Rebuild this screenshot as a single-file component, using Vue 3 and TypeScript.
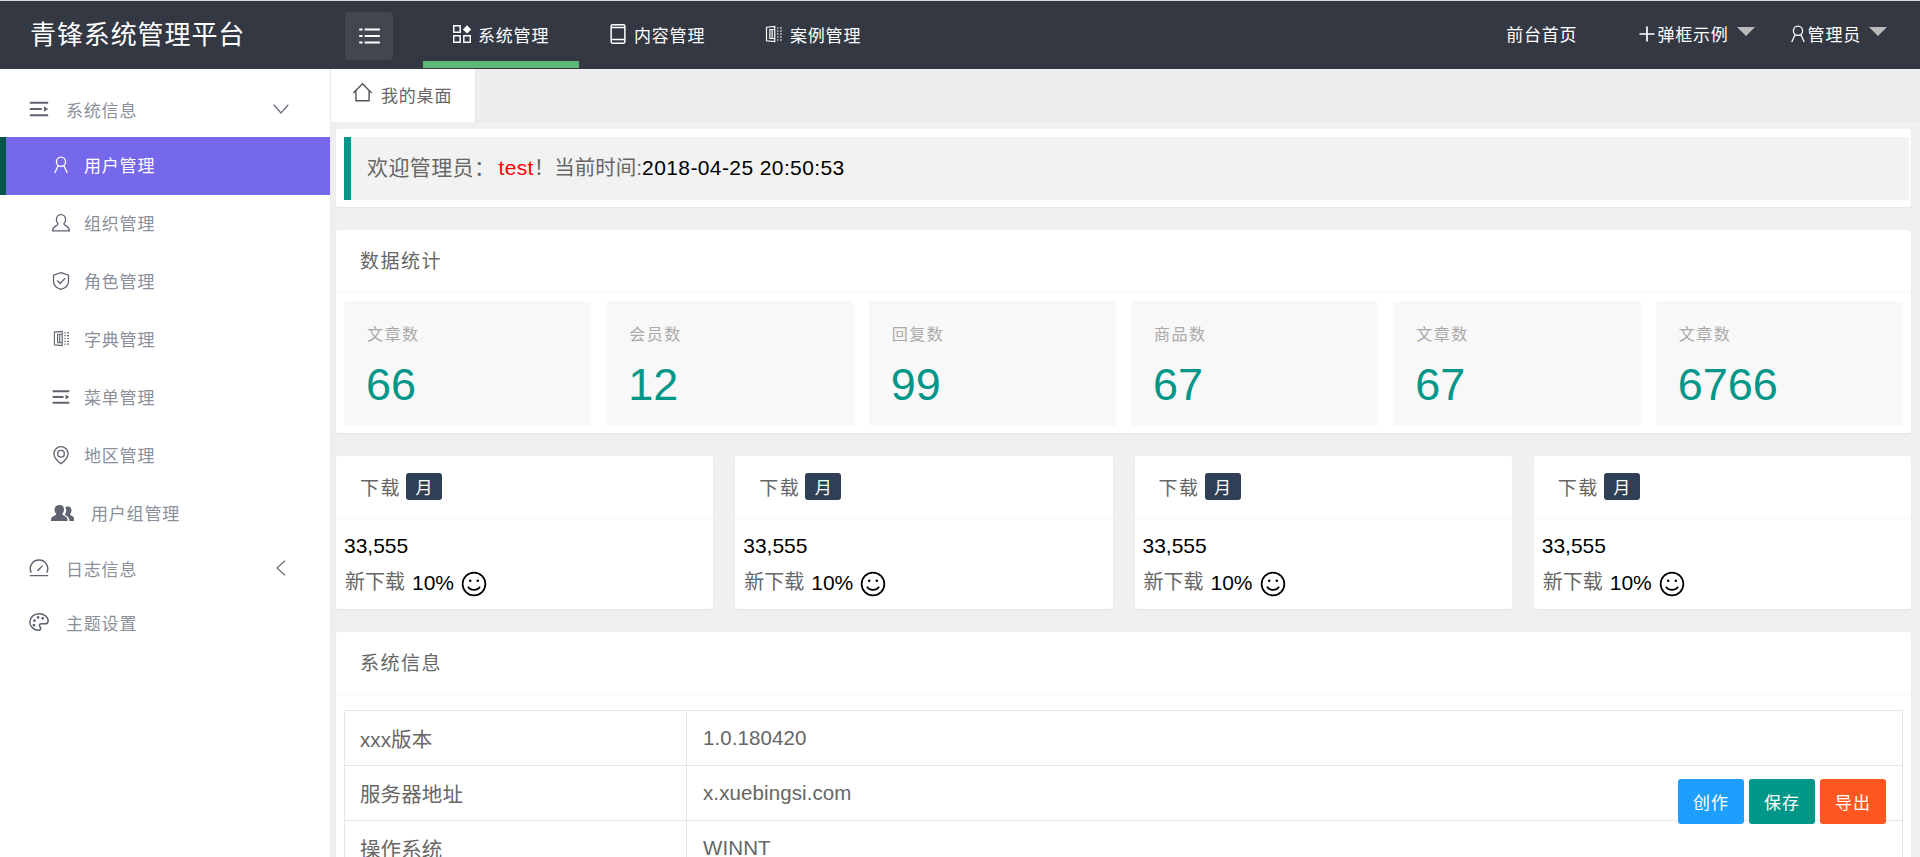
<script setup lang="ts">
import { h } from 'vue'

type IconDef = { stroke?: string[]; solid?: string[] }

const icons: Record<string, IconDef> = {
  bars: { solid: ['M2 4h20v2.400H2zM2 10.800h13v2.400H2zM2 17.600h20V20H2zM17.500 9l4.500 3-4.500 3z'] },
  list: { solid: ['M3 5h3v2H3zM8 5h14v2H8zM3 11h3v2H3zM8 11h14v2H8zM3 17h3v2H3zM8 17h14v2H8z'] },
  apps: {
    stroke: ['M3 3h7v7H3zM3 14h7v7H3zM14 14h7v7h-7z'],
    solid: ['M17.500 2.500l4.500 4.500-4.500 4.500L13 7z'],
  },
  tablet: { stroke: ['M6 2h12a1.500 1.500 0 0 1 1.500 1.500v17A1.500 1.500 0 0 1 18 22H6a1.500 1.500 0 0 1-1.500-1.500v-17A1.500 1.500 0 0 1 6 2zM4.500 18h15M5 5h14'] },
  book: {
    stroke: [
      'M2 3l11-1v20L2 21zM13 6H6.500v12H13M9.500 6v12',
      'M16 4h2M20 4h2.500M16 8h2M20 8h2.500M16 12h2M20 12h2.500M16 16h2M20 16h2.500M16 20h2M20 20h2.500',
    ],
  },
  user: { stroke: ['M12 2.500a5.500 5.500 0 1 0 0 11 5.500 5.500 0 0 0 0-11zM8.500 13L4.500 21.500M15.500 13l4 8.500'] },
  org: { stroke: ['M12 2c3.200 0 5.500 2.500 5.500 6 0 2-.8 3.800-2 5 0 1.200 1 1.800 3 2.700 2 1 3.500 2 3.500 5.800H2c0-3.800 1.500-4.800 3.500-5.800 2-.9 3-1.500 3-2.700-1.200-1.200-2-3-2-5 0-3.500 2.300-6 5.500-6z'] },
  shield: { stroke: ['M12 2l9 3v7c0 5-3.600 8.500-9 10-5.400-1.500-9-5-9-10V5zM7.500 11.500l3.500 3.500 6-6.500'] },
  pin: { stroke: ['M12 2a8.500 8.500 0 0 0-8.500 8.500C3.500 15.500 8 19.500 12 22.500c4-3 8.500-7 8.500-12A8.500 8.500 0 0 0 12 2zM12 6.500a4 4 0 1 0 0 8 4 4 0 0 0 0-8z'] },
  users: {
    solid: [
      'M9 4c2.600 0 4 2 4 4.500 0 1.800-.7 3.300-1.700 4.300 0 1 .8 1.400 2.500 2.200 1.700.8 2.700 1.800 2.700 4v1H0v-1c0-2.200 1-3.200 2.700-4 1.700-.8 2.500-1.200 2.500-2.200C4.200 11.800 3.500 10.300 3.500 8.500 3.500 6 5.400 4 9 4z',
      'M17 5.500c2.300 0 3.500 1.800 3.500 4 0 1.500-.6 2.700-1.400 3.500 0 1 .7 1.300 2.100 2 1.300.7 1.800 1.600 1.800 3.500v1.500h-4.500c0-2.800-1.200-4.300-3.300-5.300-1-.5-1.500-.8-1.500-1.200 1-1 1.500-2.500 1.500-4 0-1.300-.3-2.500-1-3.200.7-.5 1.600-.8 2.800-.8z',
    ],
  },
  gauge: {
    stroke: ['M3.500 17a9.500 9.500 0 1 1 17 0'],
    solid: ['M2 19.500h20V21H2zM10.600 13.500l5-4.500.8.800-4.500 5a1 1 0 1 1-1.300-1.300z'],
  },
  palette: {
    stroke: ['M12 3C6.500 3 2 7 2 12c0 5 4.500 9 9.500 9 1.700 0 2.300-1 2.300-2 0-1.500-1.300-2-1.300-3.300 0-1.200 1-1.700 2.500-1.700h3.500c2.500 0 3.500-1.500 3.500-3.500C22 6.500 17.500 3 12 3z'],
    solid: ['M7 9a1.500 1.500 0 1 0 0 3 1.500 1.500 0 0 0 0-3zM11 5.500a1.500 1.500 0 1 0 0 3 1.500 1.500 0 0 0 0-3zM16 6.500a1.500 1.500 0 1 0 0 3 1.500 1.500 0 0 0 0-3zM6.500 14a1.500 1.500 0 1 0 0 3 1.500 1.500 0 0 0 0-3z'],
  },
  home: { stroke: ['M1.500 12.500L12 2l10.500 10.500M4.500 10v11.500h15V10'] },
  plus: { solid: ['M11 3h2v8h8v2h-8v8h-2v-8H3v-2h8z'] },
  smile: {
    stroke: ['M12 1.500a10.500 10.500 0 1 0 0 21 10.500 10.500 0 0 0 0-21zM6.500 14.500c1 2 3 3 5.500 3s4.500-1 5.500-3'],
    solid: ['M8.500 7.800a1.200 1.200 0 1 0 0 2.400 1.200 1.200 0 0 0 0-2.400zM15.500 7.800a1.200 1.200 0 1 0 0 2.400 1.200 1.200 0 0 0 0-2.400z'],
  },
}

// small svg helper, every icon is drawn on a 24 grid
const Icon = (props: { name: string }) => {
  const def = icons[props.name]
  return h('svg', { viewBox: '0 0 24 24', class: ['icon', `icon-${props.name}`] }, [
    ...(def.stroke ?? []).map(d => h('path', { d, fill: 'none', stroke: 'currentColor', 'stroke-width': 1.6 })),
    ...(def.solid ?? []).map(d => h('path', { d, fill: 'currentColor' })),
  ])
}
Icon.props = ['name']

const navItems = [
  { icon: 'apps', label: '系统管理', active: true },
  { icon: 'tablet', label: '内容管理' },
  { icon: 'book', label: '案例管理' },
]

const subMenu = [
  { icon: 'user', label: '用户管理', active: true },
  { icon: 'org', label: '组织管理' },
  { icon: 'shield', label: '角色管理' },
  { icon: 'book', label: '字典管理' },
  { icon: 'bars', label: '菜单管理' },
  { icon: 'pin', label: '地区管理' },
  { icon: 'users', label: '用户组管理', wide: true },
]

const stats = [
  { label: '文章数', value: '66' },
  { label: '会员数', value: '12' },
  { label: '回复数', value: '99' },
  { label: '商品数', value: '67' },
  { label: '文章数', value: '67' },
  { label: '文章数', value: '6766' },
]

const downloads = [1, 2, 3, 4]

const sysInfo = [
  { name: 'xxx版本', value: '1.0.180420' },
  { name: '服务器地址', value: 'x.xuebingsi.com' },
  { name: '操作系统', value: 'WINNT' },
  { name: '运行环境', value: 'Apache/2.4.23' },
]
</script>

<template>
  <div class="page">
    <header class="topbar">
      <div class="logo">青锋系统管理平台</div>
      <button class="toggle"><Icon name="list" /></button>
      <nav class="nav">
        <a v-for="item in navItems" :key="item.label" class="nav-item" :class="{ active: item.active }">
          <Icon :name="item.icon" />
          <span>{{ item.label }}</span>
        </a>
      </nav>
      <div class="top-right">
        <a class="top-link home-link">前台首页</a>
        <a class="top-link dialog-link"><Icon name="plus" />弹框示例<i class="caret" /></a>
        <a class="top-link admin-link"><Icon name="user" />管理员<i class="caret" /></a>
      </div>
    </header>

    <div class="body">
      <aside class="sidebar">
        <div class="group first">
          <Icon name="bars" />
          <span>系统信息</span>
          <svg class="chevron down" viewBox="0 0 16 10"><path d="M.7.7L8 9l7.300-8.300" /></svg>
        </div>
        <a
          v-for="item in subMenu"
          :key="item.label"
          class="sub-item"
          :class="{ active: item.active, wide: item.wide }"
        >
          <Icon :name="item.icon" />
          <span>{{ item.label }}</span>
        </a>
        <div class="group">
          <Icon name="gauge" />
          <span>日志信息</span>
          <svg class="chevron left" viewBox="0 0 10 16"><path d="M9 .7L1 8l8 7.300" /></svg>
        </div>
        <div class="group">
          <Icon name="palette" />
          <span>主题设置</span>
        </div>
      </aside>

      <main class="main">
        <div class="tabbar">
          <div class="tab"><Icon name="home" /><span>我的桌面</span></div>
        </div>

        <div class="content">
          <section class="card welcome">
            <blockquote class="quote">
              <span class="muted">欢迎管理员：</span>
              <span class="red">test</span><span class="muted now">！当前时间:</span>2018-04-25 20:50:53
            </blockquote>
          </section>

          <section class="card">
            <h2 class="card-title">数据统计</h2>
            <div class="stats">
              <div v-for="(s, i) in stats" :key="i" class="stat">
                <div class="stat-label">{{ s.label }}</div>
                <div class="stat-value">{{ s.value }}</div>
              </div>
            </div>
          </section>

          <div class="downloads">
            <section v-for="d in downloads" :key="d" class="card download">
              <h2 class="card-title">下载<span class="tag">月</span></h2>
              <div class="download-body">
                <div class="dl-num">33,555</div>
                <div class="dl-row"><span class="muted">新下载</span> 10%<Icon name="smile" /></div>
              </div>
            </section>
          </div>

          <section class="card">
            <h2 class="card-title">系统信息</h2>
            <div class="table-wrap">
              <table class="info">
                <tr v-for="row in sysInfo" :key="row.name">
                  <td class="name">{{ row.name }}</td>
                  <td>{{ row.value }}</td>
                </tr>
              </table>
            </div>
          </section>
        </div>

        <div class="actions">
          <button class="btn blue">创作</button>
          <button class="btn green">保存</button>
          <button class="btn orange">导出</button>
        </div>
      </main>
    </div>
  </div>
</template>

<style>
html, body {
  margin: 0;
  overflow: hidden;
}
</style>

<style scoped>
.page {
  height: 857px;
  display: flex;
  flex-direction: column;
  overflow: hidden;
  font-family: "Liberation Sans", "Noto Sans CJK SC", sans-serif;
  color: #000;
}

.icon {
  display: block;
  flex: none;
  width: 18px;
  height: 18px;
}

/* top bar */
.topbar {
  flex: none;
  box-sizing: border-box;
  height: 69px;
  border-top: 1px solid #d8d8d8;
  background: #343843;
  color: #fff;
  display: flex;
  align-items: flex-start;
}

.logo {
  width: 315px;
  padding-left: 30px;
  line-height: 68px;
  font-size: 26px;
  letter-spacing: .9px;
  white-space: nowrap;
}

.toggle {
  margin-top: 11px;
  width: 48px;
  height: 48px;
  padding: 0;
  border: 0;
  border-radius: 4px;
  background: #43464f;
  color: #fff;
  display: flex;
  align-items: center;
  justify-content: center;
}

.toggle .icon {
  width: 26px;
  height: 26px;
}

.nav {
  display: flex;
  margin-left: 30px;
}

.nav-item {
  box-sizing: border-box;
  width: 156px;
  height: 67px;
  padding: 6px 0 7px 28px;
  display: flex;
  align-items: center;
  gap: 5px;
  font-size: 17px;
  letter-spacing: .8px;
}

.nav-item .icon {
  width: 22px;
  height: 22px;
}

.nav-item .icon-book {
  width: 18px;
  height: 18px;
  margin: 0 2px;
}

.nav-item.active {
  border-bottom: 7px solid #5fb878;
  padding-bottom: 0;
}

.top-right {
  margin-left: auto;
  display: flex;
}

.top-link {
  display: flex;
  align-items: center;
  height: 65px;
  font-size: 17px;
  letter-spacing: .8px;
  white-space: nowrap;
}

.top-link .icon {
  width: 20px;
  height: 20px;
}

.home-link {
  margin-right: 60px;
}

.dialog-link {
  margin-right: 33px;
}

.admin-link {
  margin-right: 33px;
}

.caret {
  width: 0;
  height: 0;
  margin: -4px 0 0 8px;
  border: 9px solid transparent;
  border-top-color: #bbb;
  border-bottom: 0;
}

/* sidebar */
.body {
  flex: 1;
  min-height: 0;
  display: flex;
}

.sidebar {
  flex: none;
  width: 331px;
  box-sizing: border-box;
  background: #fff;
  border-right: 1px solid #e9e9e9;
  color: #8a8f9a;
  font-size: 17px;
  letter-spacing: .8px;
}

.group {
  box-sizing: border-box;
  height: 54px;
  padding: 0 0 4px 28px;
  display: flex;
  align-items: center;
  gap: 16px;
}

.group .icon {
  width: 22px;
  height: 22px;
  color: #5f6470;
}

.group.first {
  margin-top: 14px;
  padding-bottom: 2px;
}

.chevron {
  fill: none;
  stroke: #6c717c;
  stroke-width: 1.300;
}

.chevron.down {
  margin-left: auto;
  margin-right: 41px;
  width: 16px;
  height: 10px;
}

.chevron.left {
  margin-left: auto;
  margin-right: 44px;
  width: 10px;
  height: 16px;
}

.sub-item {
  box-sizing: border-box;
  height: 58px;
  padding: 0 0 3px 51px;
  display: flex;
  align-items: center;
  gap: 13px;
}

.sub-item .icon {
  color: #5f6470;
  width: 20px;
  height: 20px;
}

.sub-item .icon-book {
  width: 17px;
  height: 17px;
  margin: 0 1px 0 2px;
}

.sub-item.wide .icon {
  width: 24px;
  height: 24px;
}

.sub-item.wide {
  gap: 16px;
}

.sub-item.active {
  padding-left: 45px;
  background: #7568ea;
  border-left: 6px solid #04564d;
  color: #fff;
}

.sub-item.active .icon {
  color: #fff;
}

/* main area */
.main {
  flex: 1;
  min-width: 0;
  position: relative;
  background: #f0f0f0;
}

.tabbar {
  height: 53px;
  box-sizing: border-box;
  background: #eeeef0;
  border-bottom: 1px solid #e4e6e8;
}

.tab {
  box-sizing: border-box;
  width: 145px;
  height: 53px;
  padding: 0 0 2px 21px;
  background: #fff;
  border-right: 1px solid #e4e6e8;
  display: flex;
  align-items: center;
  gap: 8px;
  color: #666;
  font-size: 17px;
  letter-spacing: .8px;
}

.tab .icon {
  width: 21px;
  height: 21px;
  margin-top: -4px;
  color: #555;
}

.content {
  padding: 7px 9px 0 5px;
}

.card {
  background: #fff;
  border-radius: 3px;
  box-shadow: 0 1px 2px rgba(0, 0, 0, .05);
  margin-bottom: 23px;
}

.welcome {
  padding: 8px 2px 7px 8px;
}

.quote {
  margin: 0;
  height: 63px;
  box-sizing: border-box;
  padding-left: 16px;
  border-left: 7px solid #009688;
  background: #f2f2f2;
  line-height: 61px;
  font-size: 21px;
  letter-spacing: .4px;
}

.muted {
  color: #666;
}

.muted.now {
  font-size: 20.500px;
  letter-spacing: 0;
}

.red {
  color: #f00;
  margin-left: 3px;
}

.card-title {
  margin: 0;
  height: 63px;
  box-sizing: border-box;
  padding: 0 0 3px 24px;
  border-bottom: 1px solid #f6f6f6;
  display: flex;
  align-items: center;
  color: #666;
  font-size: 19px;
  font-weight: 400;
  letter-spacing: 1.500px;
}

.download .card-title {
  padding-bottom: 1px;
}

.stats {
  display: grid;
  grid-template-columns: repeat(6, 1fr);
  gap: 15px;
  padding: 8px 8px 7px;
}

.stat {
  height: 125px;
  box-sizing: border-box;
  padding: 23px 23px 0;
  background: #f8f8f8;
  border-radius: 2px;
}

.stat-label {
  color: #aaa;
  font-size: 16px;
  letter-spacing: 1.500px;
  line-height: 22px;
}

.stat-value {
  margin: 14px 0 0 -1px;
  color: #009688;
  font-size: 45px;
  line-height: 50px;
}

.downloads {
  display: grid;
  grid-template-columns: repeat(4, 1fr);
  gap: 22px;
}

.tag {
  margin-left: 5px;
  width: 36px;
  height: 27px;
  border-radius: 3px;
  background: #2f4056;
  color: #fff;
  font-size: 17px;
  letter-spacing: 0;
  display: flex;
  align-items: center;
  justify-content: center;
}

.download-body {
  box-sizing: border-box;
  height: 90px;
  padding: 8px 8px 0;
  font-size: 21px;
}

.dl-num {
  line-height: 37px;
}

.dl-row {
  display: flex;
  align-items: center;
  gap: 7px;
  line-height: 37px;
}

.dl-row .muted {
  margin-left: 1px;
  font-size: 20px;
  letter-spacing: 0;
}

.dl-row .icon {
  width: 26px;
  height: 26px;
  margin-top: 3px;
}

.table-wrap {
  padding: 15px 8px 0;
}

.info {
  width: 100%;
  border-collapse: collapse;
  color: #666;
  font-size: 20.500px;
  letter-spacing: .1px;
}

.info td {
  height: 54px;
  padding: 0 16px;
  border: 1px solid #e6e6e6;
}

.info .name {
  box-sizing: border-box;
  width: 342px;
  padding: 0 15px;
}

.actions {
  position: absolute;
  top: 710px;
  left: 1347px;
  display: flex;
  gap: 5px;
}

.btn {
  width: 66px;
  height: 45px;
  padding: 0;
  border: 0;
  border-radius: 3px;
  color: #fff;
  font-family: inherit;
  font-size: 17px;
  letter-spacing: 1px;
}

.btn.blue { background: #1e9fff; }
.btn.green { background: #009688; }
.btn.orange { background: #ff5722; }
</style>
